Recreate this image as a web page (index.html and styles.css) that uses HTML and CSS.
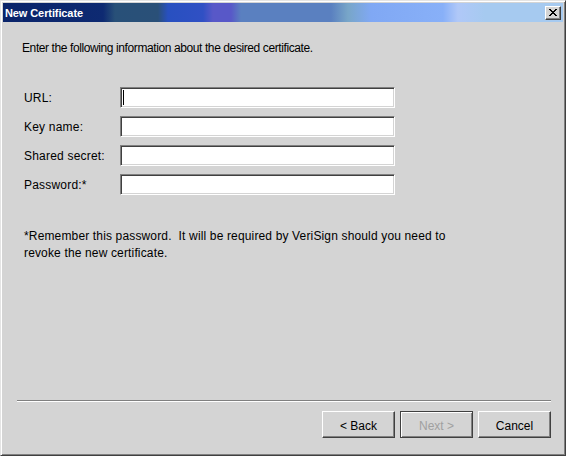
FILE: index.html
```html
<!DOCTYPE html>
<html>
<head>
<meta charset="utf-8">
<link rel="stylesheet" href="styles.css">
</head>
<body>
<div class="dialog">
  <div class="titlebar">
    <span class="title">New Certificate</span>
    <span class="close">
      <svg width="8" height="7" viewBox="0 0 8 7"><path d="M0 0h2v1h-2zM6 0h2v1h-2zM1 1h2v1h-2zM5 1h2v1h-2zM2 2h4v1h-4zM3 3h2v1h-2zM2 4h4v1h-4zM1 5h2v1h-2zM5 5h2v1h-2zM0 6h2v1h-2zM6 6h2v1h-2z" fill="#000"/></svg>
    </span>
  </div>
  <div class="content">
    <p class="intro">Enter the following information about the desired certificate.</p>
    <div class="form">
      <label class="lbl">URL:</label><div class="field"><span class="caret"></span></div>
      <label class="lbl">Key name:</label><div class="field"></div>
      <label class="lbl">Shared secret:</label><div class="field"></div>
      <label class="lbl">Password:*</label><div class="field"></div>
    </div>
    <p class="note">*Remember this password.&nbsp; It will be required by VeriSign should you need to<br>revoke the new certificate.</p>
    <div class="footer">
      <div class="separator"></div>
      <div class="buttons">
        <button class="btn">&lt; Back</button>
        <button class="btn btn-default" disabled>Next &gt;</button>
        <button class="btn">Cancel</button>
      </div>
    </div>
  </div>
</div>
</body>
</html>
```

FILE: styles.css
```css
html, body {
  margin: 0;
  padding: 0;
  background: #ffffff;
}
body {
  width: 583px;
  height: 457px;
  overflow: hidden;
}
.dialog {
  box-sizing: border-box;
  width: 566px;
  height: 456px;
  background: #d4d4d4;
  border: 1px solid;
  border-color: #e4e4e4 #404040 #404040 #e4e4e4;
  box-shadow: inset 1px 1px 0 #ffffff, inset -1px -1px 0 #808080;
  padding: 2px;
  display: flex;
  flex-direction: column;
  font-family: "Liberation Sans", Arial, sans-serif;
  color: #000;
}
.titlebar {
  height: 19px;
  display: flex;
  align-items: center;
  justify-content: space-between;
  padding: 0 2px 0 2px;
  background: linear-gradient(to right,
    #0a246a 0px, #0e2a72 100px,
    #285078 112px, #2a5078 155px,
    #2850c0 165px, #3050c4 200px,
    #5858c8 210px, #5858c8 228px,
    #5a80c0 238px, #5a80c0 328px,
    #78a6c8 345px, #80a8f4 368px,
    #88b0f8 440px, #b0c8f8 455px,
    #a6caf0 482px, #a6caf0 100%);
}
.title {
  color: #ffffff;
  font-weight: bold;
  font-size: 11px;
  letter-spacing: -0.1px;
}
.close {
  box-sizing: border-box;
  width: 16px;
  height: 14px;
  background: #d4d4d4;
  border: 1px solid;
  border-color: #ffffff #404040 #404040 #ffffff;
  box-shadow: inset -1px -1px 0 #808080;
  display: flex;
  align-items: center;
  justify-content: center;
  padding: 0 1px 1px 0;
}
.close svg { display: block; }
.content {
  flex: 1;
  display: flex;
  flex-direction: column;
  padding: 0 12px 15px 14px;
}
.intro {
  margin: 19px 0 0 5px;
  font-size: 12px;
  line-height: 14px;
  letter-spacing: -0.4px;
}
.form {
  margin: 32px 0 0 7px;
  display: grid;
  grid-template-columns: 96px 275px;
  grid-auto-rows: 21px;
  row-gap: 8px;
  align-items: center;
}
.lbl {
  font-size: 12px;
  line-height: 14px;
  letter-spacing: 0.2px;
}
.field {
  box-sizing: border-box;
  height: 21px;
  background: #ffffff;
  border: 1px solid;
  border-color: #808080 #ffffff #ffffff #808080;
  box-shadow: inset 1px 1px 0 #404040, inset -1px -1px 0 #d4d4d4;
  padding: 2px 0 0 2px;
}
.caret {
  display: block;
  width: 1px;
  height: 15px;
  background: #000;
}
.note {
  margin: 33px 0 0 7px;
  font-size: 12px;
  line-height: 17px;
  letter-spacing: 0.15px;
}
.footer {
  margin-top: auto;
}
.separator {
  height: 1px;
  background: #808080;
  border-bottom: 1px solid #ffffff;
}
.buttons {
  margin-top: 9px;
  display: flex;
  justify-content: flex-end;
  gap: 5px;
}
.btn {
  box-sizing: border-box;
  width: 73px;
  height: 27px;
  margin: 0;
  padding: 2px 0 0 0;
  background: #d4d4d4;
  border: 1px solid;
  border-color: #ffffff #404040 #404040 #ffffff;
  box-shadow: inset -1px -1px 0 #808080;
  font-family: "Liberation Sans", Arial, sans-serif;
  font-size: 12px;
  color: #000;
}
.btn-default {
  border: 1px solid #404040;
  box-shadow: inset 1px 1px 0 #ffffff, inset -1px -1px 0 #808080;
}
.btn:disabled {
  color: #a0a0a0;
}
```
